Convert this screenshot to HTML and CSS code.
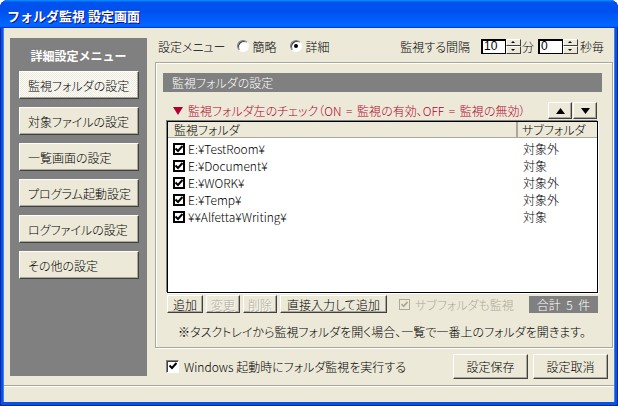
FILE: index.html
```html
<!DOCTYPE html>
<html lang="ja">
<head>
<meta charset="utf-8">
<title>フォルダ監視 設定画面</title>
<link rel="stylesheet" href="styles.css">
</head>
<body>
<div class="window">
  <div class="titlebar"><span class="title">フォルダ監視 設定画面</span></div>
  <div class="client">
    <div class="content">
      <aside class="sidemenu">
        <div class="side-title">詳細設定メニュー</div>
        <button class="btn side-btn active">監視フォルダの設定</button>
        <button class="btn side-btn">対象ファイルの設定</button>
        <button class="btn side-btn">一覧画面の設定</button>
        <button class="btn side-btn">プログラム起動設定</button>
        <button class="btn side-btn">ログファイルの設定</button>
        <button class="btn side-btn">その他の設定</button>
      </aside>
      <main class="main">
        <div class="toprow">
          <span class="menu-label">設定メニュー</span>
          <label class="radio first"><span class="rb"></span>簡略</label>
          <label class="radio"><span class="rb on"></span>詳細</label>
          <span class="spacer"></span>
          <span class="interval-label">監視する間隔</span>
          <span class="spin"><span class="field">10</span><span class="arrows"><span class="up"></span><span class="dn"></span></span></span>
          <span class="unit-min">分</span>
          <span class="spin sec"><span class="field wide">0</span><span class="arrows"><span class="up"></span><span class="dn"></span></span></span>
          <span class="unit-sec">秒毎</span>
        </div>
        <section class="group">
          <div class="group-head">監視フォルダの設定</div>
          <div class="hint-row">
            <span class="hint"><svg class="hint-mark" width="10" height="8" viewBox="0 0 10 8"><polygon points="0,0 10,0 5,8" fill="#b4002d"/></svg>監視フォルダ左のチェック（ON = 監視の有効、OFF = 監視の無効）</span>
            <span class="order">
              <button class="btn order-btn"><svg width="9" height="6" viewBox="0 0 9 6"><polygon points="4.5,0 9,6 0,6" fill="#000"/></svg></button>
              <button class="btn order-btn"><svg width="9" height="6" viewBox="0 0 9 6"><polygon points="0,0 9,0 4.5,6" fill="#000"/></svg></button>
            </span>
          </div>
          <div class="list">
            <div class="list-head"><span class="col1">監視フォルダ</span><span class="col2">サブフォルダ</span></div>
            <div class="rows">
              <div class="row"><span class="col1"><span class="chk"><svg width="8" height="8" viewBox="0 0 8 8"><polyline points="0.5,3.5 3,6 7.5,1" fill="none" stroke="#000" stroke-width="2"/></svg></span>E:¥TestRoom¥</span><span class="col2">対象外</span></div>
              <div class="row"><span class="col1"><span class="chk"><svg width="8" height="8" viewBox="0 0 8 8"><polyline points="0.5,3.5 3,6 7.5,1" fill="none" stroke="#000" stroke-width="2"/></svg></span>E:¥Document¥</span><span class="col2">対象</span></div>
              <div class="row"><span class="col1"><span class="chk"><svg width="8" height="8" viewBox="0 0 8 8"><polyline points="0.5,3.5 3,6 7.5,1" fill="none" stroke="#000" stroke-width="2"/></svg></span>E:¥WORK¥</span><span class="col2">対象外</span></div>
              <div class="row"><span class="col1"><span class="chk"><svg width="8" height="8" viewBox="0 0 8 8"><polyline points="0.5,3.5 3,6 7.5,1" fill="none" stroke="#000" stroke-width="2"/></svg></span>E:¥Temp¥</span><span class="col2">対象外</span></div>
              <div class="row"><span class="col1"><span class="chk"><svg width="8" height="8" viewBox="0 0 8 8"><polyline points="0.5,3.5 3,6 7.5,1" fill="none" stroke="#000" stroke-width="2"/></svg></span>¥¥Alfetta¥Writing¥</span><span class="col2">対象</span></div>
            </div>
          </div>
          <div class="actions">
            <button class="btn act add">追加</button>
            <button class="btn act small" disabled>変更</button>
            <button class="btn act small" disabled>削除</button>
            <button class="btn act direct">直接入力して追加</button>
            <label class="sub-chk"><span class="dchk"><svg width="7" height="7" viewBox="0 0 8 8"><polyline points="0.5,3.5 3,6 7.5,1" fill="none" stroke="#aca899" stroke-width="2"/></svg></span>サブフォルダも監視</label>
            <span class="total">合計 5 件</span>
          </div>
          <p class="note">※タスクトレイから監視フォルダを開く場合、一覧で一番上のフォルダを開きます。</p>
        </section>
        <div class="bottomrow">
          <label class="startup"><span class="schk"><svg width="8" height="8" viewBox="0 0 8 8"><polyline points="0.5,3.5 3,6 7.5,1" fill="none" stroke="#000" stroke-width="2"/></svg></span>Windows 起動時にフォルダ監視を実行する</label>
          <button class="btn big save">設定保存</button>
          <button class="btn big">設定取消</button>
        </div>
      </main>
    </div>
    <div class="statusbar"></div>
  </div>
</div>
</body>
</html>
```
FILE: styles.css
```css
* { box-sizing: border-box; }
html, body { margin: 0; padding: 0; background: #fff; }
body {
  font-family: "Noto Sans CJK JP", "Noto Sans", sans-serif;
  font-size: 12px;
  font-weight: 300;
  color: #000;
  font-feature-settings: "palt";
}

.window {
  width: 618px;
  height: 406px;
  display: flex;
  flex-direction: column;
  background: #0a52e0;
  border-radius: 8px 8px 0 0;
  overflow: hidden;
  box-shadow: inset 1px 0 #0029a8, inset -1px 0 #0029a8, inset 0 -1px #0029a8;
}

.titlebar {
  height: 28px;
  flex: none;
  display: flex;
  align-items: center;
  padding-left: 7px;
  background: linear-gradient(180deg, #0997ff, #0053ee 8%, #0050ee 40%, #0066ff 88%, #0066ff 93%, #005bff 95%, #003dd7 96%, #003dd7);
}
.title {
  color: #fff;
  font-weight: bold;
  font-size: 13px;
  padding-top: 3px;
  text-shadow: 1px 1px #0f1089;
  font-feature-settings: normal;
}

.client {
  flex: 1;
  margin: 0 4px 4px;
  background: #ece9d8;
  display: flex;
  flex-direction: column;
  box-shadow: -1px 0 #3d80f5, 1px 0 #3d80f5;
}
.content {
  height: 357px;
  flex: none;
  display: flex;
  padding: 10px 0 0 6px;
}

/* side menu */
.sidemenu {
  width: 137px;
  height: 338px;
  flex: none;
  background: #808080;
  padding: 10px 8px 0 9px;
  display: flex;
  flex-direction: column;
  gap: 8px;
}
.side-title {
  color: #fff;
  font-weight: bold;
  text-align: center;
  line-height: 15px;
  height: 15px;
  margin-left: -9px;
  margin-right: -8px;
  font-feature-settings: normal;
}

.btn {
  font: inherit;
  color: #000;
  background: #ece9d8;
  border: 1px solid;
  border-color: #fff #404040 #404040 #fff;
  box-shadow: inset -1px -1px #aca899;
  padding: 0;
  margin: 0;
  display: flex;
  align-items: center;
  justify-content: center;
  font-feature-settings: "palt";
}
.btn:disabled { color: #aca899; text-shadow: 1px 1px #fff; }

.side-btn {
  width: 120px;
  height: 28px;
  flex: none;
  justify-content: flex-start;
  padding-left: 8px;
}
.side-btn.active {
  background: repeating-conic-gradient(#fff 0% 25%, #ece9d8 0% 50%) 0 0 / 2px 2px;
}

/* main column */
.main {
  width: 458px;
  margin-left: 8px;
  display: flex;
  flex-direction: column;
}
.toprow {
  height: 16px;
  margin-bottom: 8px;
  display: flex;
  align-items: center;
  padding: 0 9px 0 3px;
  white-space: nowrap;
}
.radio { display: flex; align-items: center; gap: 4px; margin-left: 13px; }
.radio.first { margin-left: 11px; }
.rb {
  width: 12px;
  height: 12px;
  border-radius: 50%;
  background: #fff;
  border: 1px solid;
  border-color: #808080 #fff #fff #808080;
  box-shadow: inset 1px 1px #404040;
  display: flex;
  align-items: center;
  justify-content: center;
}
.rb.on::after {
  content: "";
  width: 4px;
  height: 4px;
  border-radius: 50%;
  background: #000;
}
.spacer { flex: 1; }
.spin { display: flex; margin-left: 11px; }
.spin.sec { margin-left: 4px; }
.field {
  width: 25px;
  height: 15px;
  background: #fff;
  border: 1px solid #000;
  border-top-width: 2px;
  border-left-width: 2px;
  line-height: 11px;
  padding-left: 1px;
  font-family: "Liberation Sans", sans-serif;
  font-weight: normal;
}
.arrows { display: flex; flex-direction: column; width: 15px; height: 15px; }
.arrows span {
  flex: 1;
  background: #ece9d8;
  border: 1px solid;
  border-color: #fff #404040 #404040 #fff;
  display: flex;
  align-items: center;
  justify-content: center;
}
.arrows .up::after {
  content: "";
  border-style: solid;
  border-width: 0 2px 2px;
  border-color: transparent transparent #000;
}
.arrows .dn::after {
  content: "";
  border-style: solid;
  border-width: 2px 2px 0;
  border-color: #000 transparent transparent;
}
.unit-min { margin-left: 1px; }
.unit-sec { margin-left: 2px; }

/* group box */
.group {
  height: 286px;
  flex: none;
  border: 1px solid #aca899;
  box-shadow: inset 1px 1px #fff, 1px 1px #fff;
  padding: 10px 10px 0 7px;
}
.group-head {
  height: 19px;
  line-height: 19px;
  background: #808080;
  color: #fff;
  padding-left: 9px;
}
.hint-row {
  height: 19px;
  margin-top: 9px;
  display: flex;
  align-items: center;
  padding: 0 5px 0 10px;
}
.hint {
  color: #b4002d;
  display: flex;
  align-items: center;
  gap: 5px;
  white-space: nowrap;
  word-spacing: 2px;
}
.order { margin-left: auto; display: flex; gap: 1px; }
.order-btn { width: 24px; height: 17px; }

.list {
  margin: 1px 4px 0;
  height: 172px;
  border: 1px solid #000;
  background: #fff;
  box-shadow: -1px -1px #808080, 1px 1px #fff;
}
.list-head {
  height: 16px;
  display: flex;
  background: #ece9d8;
  border-bottom: 1px solid #aca899;
  line-height: 15px;
}
.list-head .col1 {
  width: 350px;
  padding-left: 6px;
  border-right: 2px solid #aca899;
}
.list-head .col2 { padding-left: 4px; }
.rows { padding-top: 2px; }
.row {
  height: 17px;
  display: flex;
  align-items: center;
}
.row .col1 {
  width: 350px;
  display: flex;
  align-items: center;
  gap: 3px;
  padding-left: 5px;
}
.row .col2 { padding-left: 5px; }
.chk {
  width: 12px;
  height: 12px;
  border: 2px solid #000;
  background: #fff;
  display: flex;
  align-items: center;
  justify-content: center;
}

.actions {
  margin: 2px 4px 0;
  height: 18px;
  display: flex;
  align-items: center;
  gap: 3px;
}
.act { height: 18px; }
.act.add { width: 36px; }
.act.small { width: 34px; }
.act.direct { width: 107px; }
.sub-chk {
  display: flex;
  align-items: center;
  gap: 5px;
  margin-left: 9px;
  color: #aca899;
  white-space: nowrap;
}
.dchk {
  width: 11px;
  height: 11px;
  border: 1px solid #aca899;
  background: #ece9d8;
  display: flex;
  align-items: center;
  justify-content: center;
}
.total {
  margin-left: auto;
  width: 69px;
  height: 17px;
  background: #808080;
  color: #fff;
  text-align: center;
  line-height: 17px;
  word-spacing: 3px;
}
.note {
  margin: 12px 0 0 15px;
  line-height: 14px;
  white-space: nowrap;
}

.bottomrow {
  height: 36px;
  display: flex;
  align-items: center;
  padding: 0 5px 0 11px;
  gap: 5px;
}
.startup {
  display: flex;
  align-items: center;
  gap: 5px;
  white-space: nowrap;
}
.schk {
  width: 13px;
  height: 13px;
  background: #fff;
  border: 1px solid;
  border-color: #808080 #fff #fff #808080;
  box-shadow: inset 1px 1px #404040;
  display: flex;
  align-items: center;
  justify-content: center;
}
.big { width: 75px; height: 25px; }
.big.save { margin-left: auto; }

.statusbar {
  flex: 1;
  border-top: 1px solid #aca899;
  box-shadow: inset 0 1px #fff;
}
```
